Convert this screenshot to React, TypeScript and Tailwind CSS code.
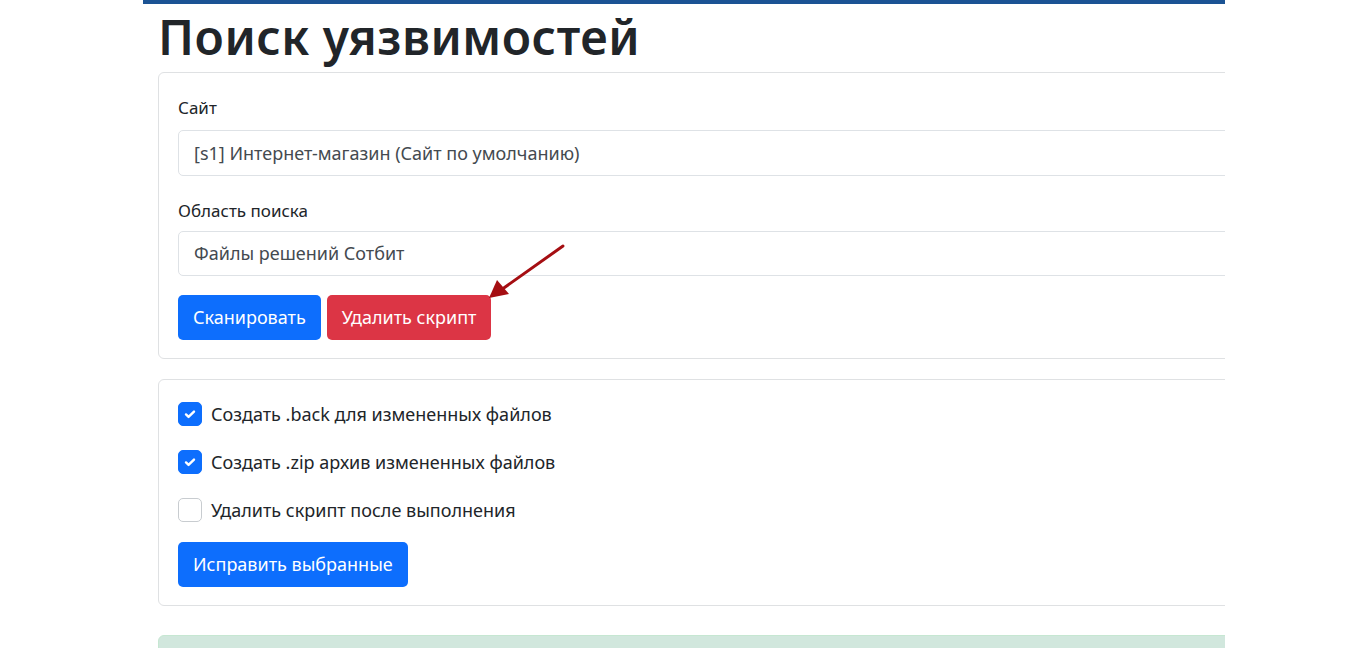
import React from 'react';

const Check = ({ on, label }: { on: boolean; label: string }) => (
  <label className="flex items-center gap-[9px] h-[24px]">
    <span
      className={
        'w-[24px] h-[24px] rounded-[5px] flex items-center justify-center ' +
        (on ? 'bg-[#0d6efd] border border-[#0d6efd]' : 'bg-white border border-[#c8ccd0]')
      }
    >
      {on && (
        <svg width="16" height="16" viewBox="0 0 20 20">
          <path d="M5 10.5l3.2 3.2L15 7" fill="none" stroke="#fff" strokeWidth="3" strokeLinecap="round" strokeLinejoin="round" />
        </svg>
      )}
    </span>
    <span className="text-[18px] text-[#212529]">{label}</span>
  </label>
);

export default function App() {
  return (
    <div className="w-[1368px] h-[648px] bg-white overflow-hidden" style={{ fontFamily: '"Noto Sans", "Open Sans", sans-serif' }}>
      <div className="ml-[143px] w-[1082px] h-full overflow-hidden relative">
        <div className="h-[4px] bg-[#1b5394]" />
        <div className="pl-[15px] w-[1200px]">
          <h1 className="text-[48px] leading-[60px] font-semibold text-[#212529] mt-[3px] tracking-[0.5px]">Поиск уязвимостей</h1>
          <div className="mt-[5px] border border-[#dfe1e3] rounded-[6px] px-[19px] pt-[22px] pb-[18px]">
            <div className="text-[17px] text-[#212529] leading-[26px]">Сайт</div>
            <div className="mt-[9px] h-[46px] border border-[#dee2e6] rounded-[5px] flex items-center pl-[15px] text-[18px] text-[#444a50]">[s1] Интернет-магазин (Сайт по умолчанию)</div>
            <div className="mt-[22px] text-[17px] text-[#212529] leading-[26px]">Область поиска</div>
            <div className="mt-[7px] h-[45px] border border-[#dee2e6] rounded-[5px] flex items-center pl-[15px] text-[18px] text-[#444a50]">Файлы решений Сотбит</div>
            <div className="mt-[19px] flex gap-[6px]">
              <button className="h-[45px] px-[15px] rounded-[5px] bg-[#0d6efd] text-white text-[18px]">Сканировать</button>
              <button className="h-[45px] px-[15px] rounded-[5px] bg-[#dc3545] text-white text-[18px]">Удалить скрипт</button>
            </div>
          </div>
          <div className="mt-[20px] border border-[#dfe1e3] rounded-[6px] px-[19px] pt-[22px] pb-[18px]">
            <div className="flex flex-col gap-[24px]">
              <Check on label="Создать .back для измененных файлов" />
              <Check on label="Создать .zip архив измененных файлов" />
              <Check on={false} label="Удалить скрипт после выполнения" />
            </div>
            <button className="mt-[20px] h-[45px] px-[15px] rounded-[5px] bg-[#0d6efd] text-white text-[18px]">Исправить выбранные</button>
          </div>
          <div className="mt-[29px] h-[60px] border border-[#c6e7d2] rounded-[6px] bg-[#d1e7dd]" />
        </div>
        <svg className="absolute left-[340px] top-[240px]" width="90" height="65" viewBox="0 0 90 65">
          <line x1="80" y1="6" x2="18" y2="50" stroke="#a50e12" strokeWidth="3" strokeLinecap="round" />
          <polygon points="6,58 14,40 26,54" fill="#a50e12" />
        </svg>
      </div>
    </div>
  );
}
